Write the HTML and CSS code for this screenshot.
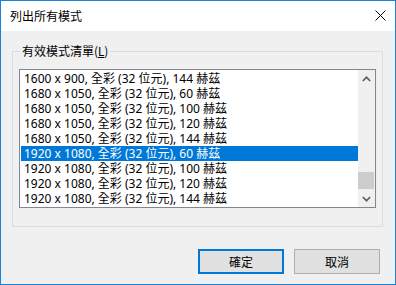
FILE: index.html
```html
<!DOCTYPE html>
<html lang="zh-Hant">
<head>
<meta charset="utf-8">
<title>列出所有模式</title>
<link rel="stylesheet" href="styles.css">
</head>
<body>
<div class="window">
  <div class="titlebar">
    <span class="title">列出所有模式</span>
    <span class="close" aria-label="關閉">
      <svg width="11" height="11" viewBox="0 0 11 11"><path d="M0.5 0.5 L10.5 10.5 M10.5 0.5 L0.5 10.5" stroke="#000" stroke-width="1" fill="none"/></svg>
    </span>
  </div>
  <div class="content">
    <div class="group">
      <span class="group-label">有效模式清單(<u>L</u>)</span>
      <div class="listbox">
        <ul class="items">
          <li class="item">1600 x 900, 全彩 (32 位元), 144 赫茲</li>
          <li class="item">1680 x 1050, 全彩 (32 位元), 60 赫茲</li>
          <li class="item">1680 x 1050, 全彩 (32 位元), 100 赫茲</li>
          <li class="item">1680 x 1050, 全彩 (32 位元), 120 赫茲</li>
          <li class="item">1680 x 1050, 全彩 (32 位元), 144 赫茲</li>
          <li class="item selected">1920 x 1080, 全彩 (32 位元), 60 赫茲</li>
          <li class="item">1920 x 1080, 全彩 (32 位元), 100 赫茲</li>
          <li class="item">1920 x 1080, 全彩 (32 位元), 120 赫茲</li>
          <li class="item">1920 x 1080, 全彩 (32 位元), 144 赫茲</li>
        </ul>
        <div class="scrollbar">
          <div class="arrow">
            <svg width="9" height="6" viewBox="0 0 9 6"><path d="M0.8 5 L4.5 1.3 L8.2 5" stroke="#606060" stroke-width="1.7" fill="none"/></svg>
          </div>
          <div class="track"><div class="thumb"></div></div>
          <div class="arrow">
            <svg width="9" height="6" viewBox="0 0 9 6"><path d="M0.8 1 L4.5 4.7 L8.2 1" stroke="#606060" stroke-width="1.7" fill="none"/></svg>
          </div>
        </div>
      </div>
    </div>
    <div class="buttons">
      <button class="btn default">確定</button>
      <button class="btn">取消</button>
    </div>
  </div>
</div>
</body>
</html>
```

FILE: styles.css
```css
html, body {
  margin: 0;
  padding: 0;
  background: #ffffff;
}

.window {
  box-sizing: border-box;
  width: 396px;
  height: 285px;
  border: 1px solid #1883d7;
  display: flex;
  flex-direction: column;
  font-family: "Noto Sans", "Noto Sans CJK TC", sans-serif;
  font-size: 12px;
  color: #000;
}

.titlebar {
  height: 30px;
  flex: none;
  background: #ffffff;
  display: flex;
  align-items: center;
  justify-content: space-between;
  padding: 0 9px 1px 9px;
  box-sizing: border-box;
}

.title {
  font-family: "Noto Sans CJK TC", sans-serif;
  font-size: 12px;
  line-height: 15px;
}

.close {
  display: flex;
  width: 11px;
  height: 11px;
}

.content {
  flex: 1;
  background: #f0f0f0;
  display: flex;
  flex-direction: column;
  padding: 20px 12px 0 11px;
}

.group {
  position: relative;
  box-sizing: border-box;
  height: 176px;
  border: 1px solid #dcdcdc;
  padding: 17px 6px 18px 6px;
}

.group-label {
  position: absolute;
  top: -9px;
  left: 7px;
  padding: 0 2px;
  background: #f0f0f0;
  font-family: "Noto Sans CJK TC", sans-serif;
  line-height: 15px;
}

.group-label u {
  font-family: "Noto Sans", sans-serif;
}

.listbox {
  box-sizing: border-box;
  height: 139px;
  border: 1px solid #828790;
  background: #ffffff;
  display: flex;
}

.items {
  list-style: none;
  margin: 0;
  padding: 1px 0 1px 1px;
  flex: 1;
}

.item {
  height: 15px;
  line-height: 15px;
  padding-left: 3px;
  white-space: nowrap;
}

.item.selected {
  background: #0078d7;
  color: #ffffff;
}

.scrollbar {
  width: 17px;
  flex: none;
  background: #f0f0f0;
  display: flex;
  flex-direction: column;
}

.arrow {
  height: 17px;
  flex: none;
  display: flex;
  align-items: center;
  justify-content: center;
}

.track {
  flex: 1;
  display: flex;
  flex-direction: column;
  justify-content: flex-end;
}

.thumb {
  height: 17px;
  margin: 0 1px 1px 0;
  background: #cdcdcd;
}

.buttons {
  display: flex;
  justify-content: flex-end;
  gap: 10px;
  margin-top: 22px;
  margin-right: 3px;
}

.btn {
  box-sizing: border-box;
  width: 86px;
  height: 25px;
  margin: 0;
  padding: 0;
  background: #e1e1e1;
  border: 1px solid #adadad;
  font-family: "Noto Sans CJK TC", sans-serif;
  font-size: 12px;
  color: #000;
}

.btn.default {
  border: 2px solid #0078d7;
}
```
